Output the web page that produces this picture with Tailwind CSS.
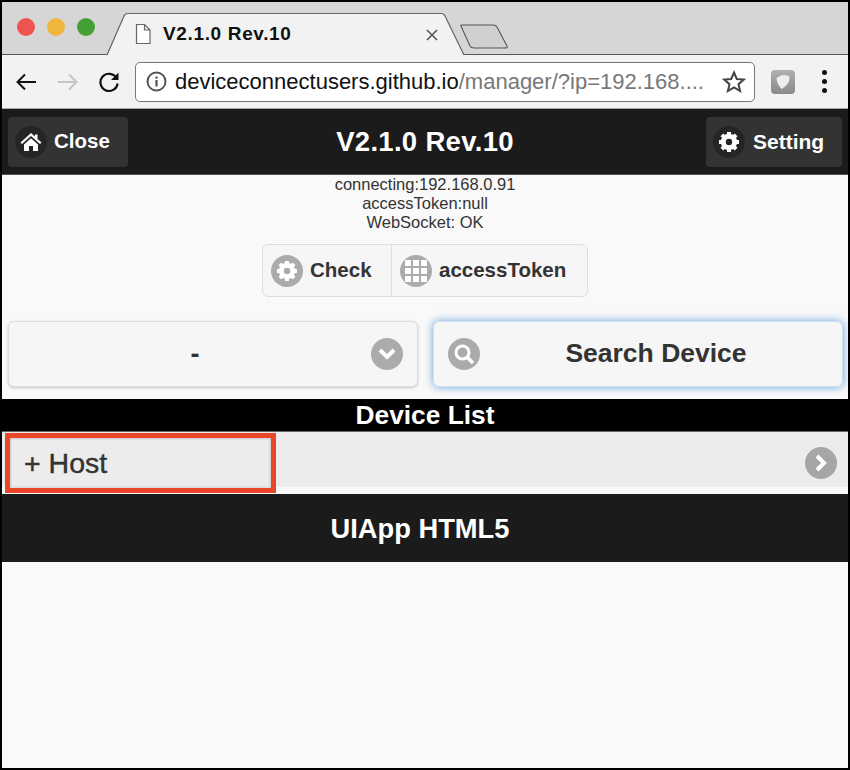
<!DOCTYPE html>
<html lang="en">
<head>
    <meta charset="UTF-8">
    <title>V2.1.0 Rev.10</title>
    <script src="https://cdn.jsdelivr.net/npm/@tailwindcss/browser@4"></script>
</head>
<body class="bg-white">
<div class="relative w-[850px] h-[770px] overflow-hidden border-t-2 border-l-2 border-r-2 border-b-2 border-black bg-[#f9f9f9] font-['Liberation_Sans',sans-serif] flex flex-col">

    <!-- tab strip -->
    <div class="relative h-[53px] shrink-0 bg-[#d6d6d6] border-b border-[#555] flex items-center">
        <div class="flex gap-[12px] pl-[15px] pb-[2px]">
            <span class="w-[18px] h-[18px] rounded-full bg-[#ef5350]"></span>
            <span class="w-[18px] h-[18px] rounded-full bg-[#efb53d]"></span>
            <span class="w-[18px] h-[18px] rounded-full bg-[#44a035]"></span>
        </div>
        <!-- active tab -->
        <svg class="absolute left-[103px] top-[10px]" width="368" height="44" viewBox="0 0 368 44">
            <path d="M2 43.5 L19 4 Q20 1.5 23 1.5 L336 1.5 Q339 1.5 340 4 L359 43.5 L2 43.5 Z" fill="#f2f2f2"/>
            <path d="M2 43 L19 4 Q20 1.5 23 1.5 L336 1.5 Q339 1.5 340 4 L359 43" fill="none" stroke="#666" stroke-width="1.2"/>
        </svg>
        <svg class="absolute left-[132px] top-[21px]" width="18" height="22" viewBox="0 0 18 22">
            <path d="M2.5 1.5 H10.5 L16 7 V20.5 H2.5 Z M10.5 1.5 V7 H16" fill="#fff" stroke="#666" stroke-width="1.2"/>
        </svg>
        <span class="absolute left-[161px] top-[21px] text-[19px] leading-[22px] font-bold text-[#111] tracking-[0.65px]">V2.1.0 Rev.10</span>
        <svg class="absolute left-[423px] top-[26px]" width="14" height="14" viewBox="0 0 14 14">
            <path d="M2 2 L12 12 M12 2 L2 12" stroke="#555" stroke-width="1.6"/>
        </svg>
        <!-- new tab -->
        <svg class="absolute left-[456px] top-[21px]" width="54" height="28" viewBox="0 0 54 28">
            <path d="M3 3 Q2 2 4 2 L35 2 Q38 2 39 4 L49 23 Q50 25 47 25 L16 25 Q13 25 12 23 Z" fill="#d0d0d0" stroke="#555" stroke-width="1.1"/>
        </svg>
    </div>

    <!-- toolbar -->
    <div class="h-[54px] shrink-0 bg-[#f2f2f2] border-b border-[#aaa] flex items-center">
        <svg class="ml-[13px]" width="22" height="22" viewBox="0 0 22 22">
            <path d="M21 11 H3 M10 3.5 L2.5 11 L10 18.5" fill="none" stroke="#111" stroke-width="2"/>
        </svg>
        <svg class="ml-[20px]" width="22" height="22" viewBox="0 0 22 22">
            <path d="M1 11 H19 M12 3.5 L19.5 11 L12 18.5" fill="none" stroke="#c4c4c4" stroke-width="2"/>
        </svg>
        <svg class="ml-[19px]" width="22" height="22" viewBox="0 0 22 22">
            <path d="M18.5 7 A8.6 8.6 0 1 0 19.6 12.5" fill="none" stroke="#111" stroke-width="2.2"/>
            <path d="M20.5 1.5 V9 H13 Z" fill="#111"/>
        </svg>
        <div class="ml-[15px] w-[620px] h-[40px] bg-white rounded-[5px] border border-[#777] flex items-center">
            <svg class="ml-[10px] shrink-0" width="21" height="21" viewBox="0 0 21 21">
                <circle cx="10.5" cy="10.5" r="9" fill="none" stroke="#555" stroke-width="2"/>
                <rect x="9.4" y="9" width="2.2" height="6.5" fill="#555"/>
                <rect x="9.4" y="5.5" width="2.2" height="2.2" fill="#555"/>
            </svg>
            <span class="ml-[8px] text-[22px] leading-[28px] whitespace-nowrap text-[#111]">deviceconnectusers.github.io<span class="text-[#777]">/manager/?ip=192.168....</span></span>
            <svg class="ml-auto mr-[8px] shrink-0" width="24" height="23" viewBox="0 0 24 23">
                <path d="M12 2.5 L14.8 9 L21.8 9.6 L16.5 14.2 L18.1 21 L12 17.4 L5.9 21 L7.5 14.2 L2.2 9.6 L9.2 9 Z" fill="none" stroke="#444" stroke-width="2"/>
            </svg>
        </div>
        <div class="ml-[16px] w-[24px] h-[24px] rounded-[4px] bg-gradient-to-b from-[#b0b0b0] to-[#8a8a8a] flex items-center justify-center">
            <svg width="16" height="16" viewBox="0 0 16 16">
                <path d="M1.5 4 Q8 -1 14.5 2.5 Q15 10 7 15 Q2 11 1.5 4 Z" fill="#eee"/>
            </svg>
        </div>
        <div class="ml-[27px] flex flex-col gap-[4px]">
            <span class="w-[5px] h-[5px] rounded-full bg-[#111]"></span>
            <span class="w-[5px] h-[5px] rounded-full bg-[#111]"></span>
            <span class="w-[5px] h-[5px] rounded-full bg-[#111]"></span>
        </div>
    </div>

    <!-- app header -->
    <div class="h-[66px] shrink-0 bg-[#1b1b1b] border-b border-[#555] grid grid-cols-[1fr_auto_1fr] items-center pl-[6px] pr-[6px]">
        <div class="w-[120px] h-[50px] rounded-[4px] bg-[#333] flex items-center pl-[7px]">
            <span class="w-[32px] h-[32px] rounded-full bg-[#252525] flex items-center justify-center">
                <svg width="22" height="20" viewBox="0 0 22 20">
                    <path d="M11 1 L15 4.6 V2.5 H17.5 V6.9 L21.5 10.5 L20 12 L11 4 L2 12 L0.5 10.5 Z M4 12.5 L11 6.3 L18 12.5 V19 H13 V14 H9 V19 H4 Z" fill="#fff"/>
                </svg>
            </span>
            <span class="ml-[7px] text-[20.5px] font-bold text-white">Close</span>
        </div>
        <span class="text-[27.5px] font-bold text-white tracking-[0.3px]">V2.1.0 Rev.10</span>
        <div class="justify-self-end w-[136px] h-[50px] rounded-[4px] bg-[#333] flex items-center pl-[7px]">
            <span class="w-[32px] h-[32px] rounded-full bg-[#252525] flex items-center justify-center">
                <svg width="22" height="22" viewBox="0 0 22 22">
                    <circle cx="11" cy="11" r="6" fill="none" stroke="#fff" stroke-width="4.4"/>
                    <path d="M11 1 V21 M1 11 H21 M3.9 3.9 L18.1 18.1 M18.1 3.9 L3.9 18.1" stroke="#fff" stroke-width="4"/>
                    <circle cx="11" cy="11" r="3.2" fill="#252525"/>
                </svg>
            </span>
            <span class="ml-[8px] text-[21px] font-bold text-white">Setting</span>
        </div>
    </div>

    <!-- status -->
    <div class="flex flex-col items-center text-[16.5px] leading-[19px] text-[#333] h-[69px] shrink-0">
        <span>connecting:192.168.0.91</span>
        <span>accessToken:null</span>
        <span>WebSocket: OK</span>
    </div>

    <!-- check / accessToken -->
    <div class="flex justify-center shrink-0">
        <div class="h-[53px] rounded-[6px] border border-[#ddd] bg-[#f6f6f6] flex items-center text-[20.5px] font-bold text-[#333]">
            <div class="w-[129px] h-full flex items-center pl-[8px] border-r border-[#ddd]">
                <span class="w-[32px] h-[32px] rounded-full bg-[#ababab] flex items-center justify-center">
                    <svg width="22" height="22" viewBox="0 0 22 22">
                        <circle cx="11" cy="11" r="6" fill="none" stroke="#fff" stroke-width="4.4"/>
                        <path d="M11 1 V21 M1 11 H21 M3.9 3.9 L18.1 18.1 M18.1 3.9 L3.9 18.1" stroke="#fff" stroke-width="4"/>
                        <circle cx="11" cy="11" r="3.2" fill="#ababab"/>
                    </svg>
                </span>
                <span class="ml-[7px]">Check</span>
            </div>
            <div class="w-[195px] h-full flex items-center pl-[8px]">
                <span class="w-[32px] h-[32px] rounded-full bg-[#ababab] flex items-center justify-center overflow-hidden">
                    <span class="grid grid-cols-3 gap-[2px]">
                        <i class="w-[6px] h-[6px] bg-white"></i><i class="w-[6px] h-[6px] bg-white"></i><i class="w-[6px] h-[6px] bg-white"></i>
                        <i class="w-[6px] h-[6px] bg-white"></i><i class="w-[6px] h-[6px] bg-white"></i><i class="w-[6px] h-[6px] bg-white"></i>
                        <i class="w-[6px] h-[6px] bg-white"></i><i class="w-[6px] h-[6px] bg-white"></i><i class="w-[6px] h-[6px] bg-white"></i>
                    </span>
                </span>
                <span class="ml-[7px]">accessToken</span>
            </div>
        </div>
    </div>

    <!-- select + search -->
    <div class="flex shrink-0 mt-[24px] pl-[6px] gap-[15px]">
        <div class="relative w-[410px] h-[66px] rounded-[6px] border border-[#ddd] bg-[#f6f6f6] shadow-[0_1px_3px_rgba(0,0,0,0.2)] flex items-center justify-center text-[27px] font-bold text-[#333]">
            <span class="pr-[36px]">-</span>
            <span class="absolute right-[14px] top-[16px] w-[32px] h-[32px] rounded-full bg-[#ababab] flex items-center justify-center">
                <svg width="20" height="14" viewBox="0 0 20 14"><path d="M3 3 L10 10 L17 3" fill="none" stroke="#fff" stroke-width="4"/></svg>
            </span>
        </div>
        <div class="relative w-[410px] h-[66px] rounded-[6px] border border-[#cfe0f0] bg-[#f6f6f6] shadow-[0_0_9px_rgba(56,136,214,0.75)] flex items-center justify-center text-[26.5px] font-bold text-[#333]">
            <span class="absolute left-[14px] top-[16px] w-[32px] h-[32px] rounded-full bg-[#ababab] flex items-center justify-center">
                <svg width="24" height="24" viewBox="0 0 24 24">
                    <circle cx="10.5" cy="10.5" r="6.5" fill="none" stroke="#fff" stroke-width="3"/>
                    <path d="M15.5 15.5 L21 21" stroke="#fff" stroke-width="3.5"/>
                </svg>
            </span>
            <span class="pl-[36px]">Search Device</span>
        </div>
    </div>

    <!-- device list -->
    <div class="mt-[12px] h-[33px] shrink-0 bg-black border-b border-[#666] flex items-center justify-center pt-[1px] text-[26.3px] font-bold text-white">Device List</div>
    <div class="h-[55px] shrink-0 bg-[#ececec] flex items-center justify-between pl-[22px] pr-[11px] pt-[7px] text-[28.5px] text-[#333]">
        <span class="[-webkit-text-stroke:0.4px_#333]">+ Host</span>
        <span class="w-[32px] h-[32px] rounded-full bg-[#a6a6a6] flex items-center justify-center">
            <svg width="14" height="20" viewBox="0 0 14 20"><path d="M3 3 L10 10 L3 17" fill="none" stroke="#fff" stroke-width="4"/></svg>
        </span>
    </div>
    <div class="mt-[7px] h-[68px] shrink-0 bg-[#1b1b1b] flex items-center justify-center pt-[2px] text-[27.3px] font-bold text-white pr-[10px]">UIApp HTML5</div>

    <!-- red highlight from the docs screenshot -->
    <div class="absolute left-[3px] top-[431px] w-[271px] h-[60px] border-[5px] border-[#e9462a] shadow-[inset_0_0_3px_rgba(0,0,0,0.3)]"></div>
</div>
</body>
</html>
